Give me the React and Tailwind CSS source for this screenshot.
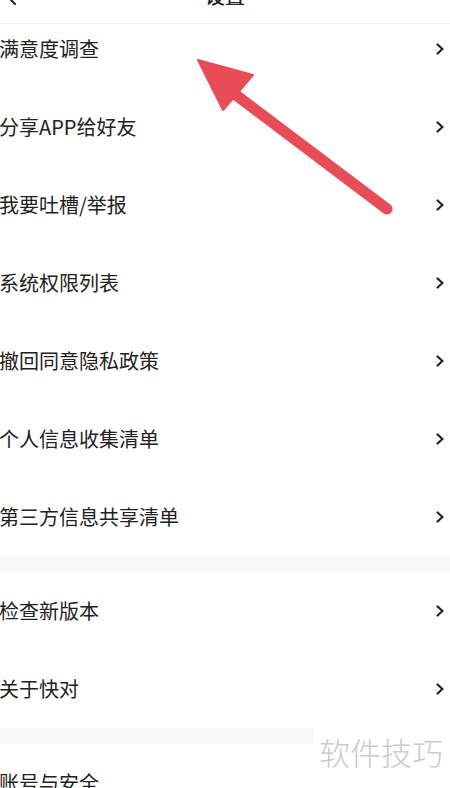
import React from "react";

const Chevron = () => (
  <svg width="10" height="12" viewBox="0 0 10 12" className="shrink-0">
    <path d="M2.5 1.5 L7.5 6 L2.5 10.5" fill="none" stroke="#222" strokeWidth="2.2" strokeLinecap="round" strokeLinejoin="round" />
  </svg>
);

const Row = ({ label, className = "h-[78px]" }) => (
  <div className={`flex items-center justify-between pr-[5px] ${className}`}>
    <span className="text-[20px] leading-[24px] text-[#222] -ml-[1px]">{label}</span>
    <Chevron />
  </div>
);

export default function App() {
  const group1 = ["分享APP给好友", "我要吐槽/举报", "系统权限列表", "撤回同意隐私政策", "个人信息收集清单", "第三方信息共享清单"];
  return (
    <div
      className="relative w-[450px] h-[788px] overflow-hidden bg-white"
      style={{ fontFamily: '"Noto Sans CJK SC", "Noto Sans", sans-serif' }}
    >
      <div className="grid grid-cols-3 h-[24px] border-b border-[#f3f3f3] overflow-hidden">
        <div className="pl-[6px] -mt-[9px]">
          <svg width="12" height="14" viewBox="0 0 12 14">
            <path d="M9 1 L3 7 L9 13" fill="none" stroke="#222" strokeWidth="2" strokeLinecap="round" strokeLinejoin="round" />
          </svg>
        </div>
        <div className="flex justify-center -mt-[15px]">
          <span className="text-[20px] leading-[22px] font-medium text-[#222]">设置</span>
        </div>
        <div />
      </div>

      <Row label="满意度调查" className="h-[64px] pb-[14px]" />
      {group1.map((l) => (
        <Row key={l} label={l} />
      ))}
      <div className="h-[16px] bg-[#f7f8f8]" />
      <Row label="检查新版本" />
      <Row label="关于快对" />
      <div className="h-[16px] bg-[#f7f8f8]" />
      <Row label="账号与安全" />

      <div className="absolute left-[314px] top-[728px] w-[136px] h-[60px] bg-white flex items-start">
        <span className="ml-[5px] mt-[4px] text-[31px] leading-[40px] text-[#cbcbcb] tracking-[0px]" style={{ fontWeight: 300 }}>
          软件技巧
        </span>
      </div>

      <svg className="absolute left-0 top-0 pointer-events-none" width="450" height="788" viewBox="0 0 450 788">
        <line x1="232" y1="92" x2="387" y2="209" stroke="#e84c57" strokeWidth="11" strokeLinecap="round" />
        <polygon points="198,60 253,75 223,110" fill="#e84c57" stroke="#e84c57" strokeWidth="2" strokeLinejoin="round" />
      </svg>
    </div>
  );
}
